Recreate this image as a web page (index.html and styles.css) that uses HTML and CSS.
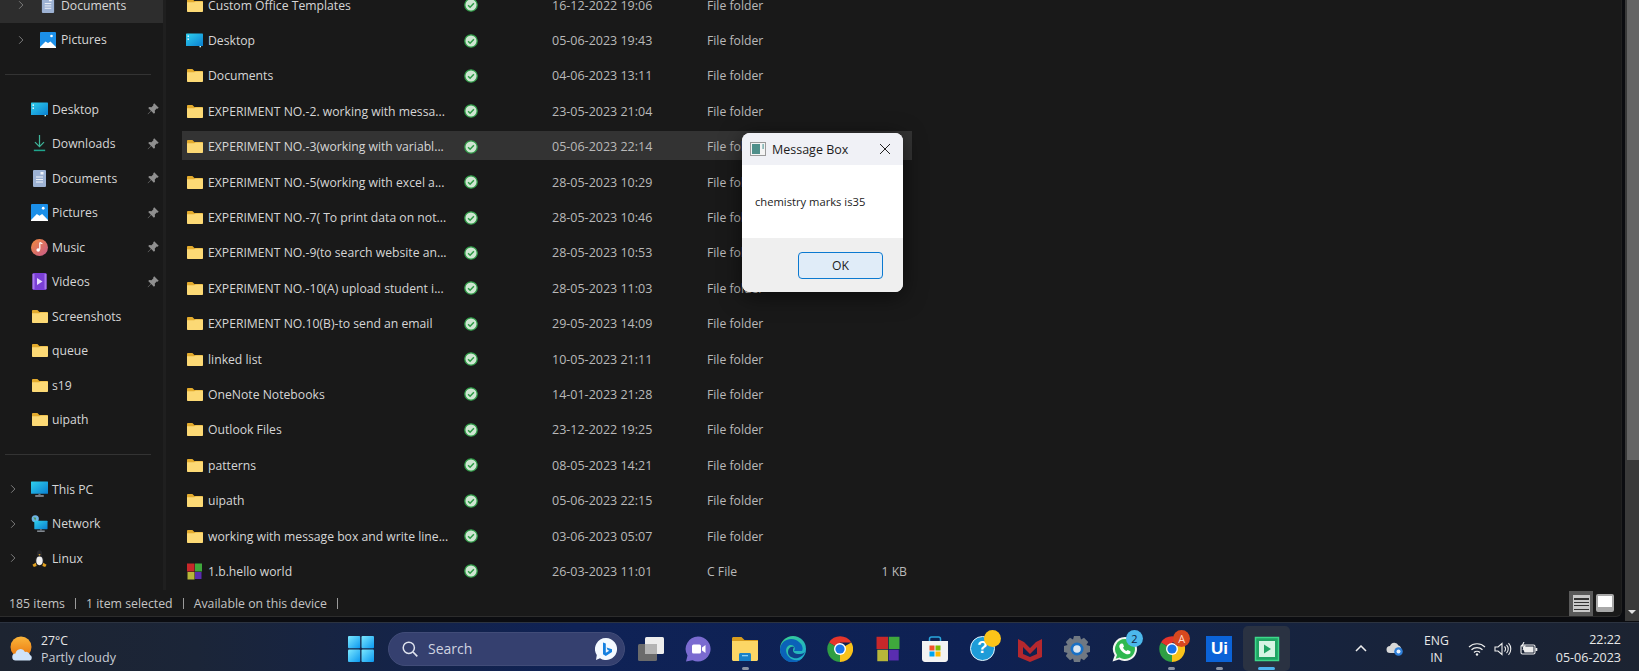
FILE: index.html
```html
<!DOCTYPE html>
<html>
<head>
<meta charset="UTF-8">
<title>File Explorer</title>
<link rel="stylesheet" href="styles.css">
</head>
<body>
<svg class="defs" width="0" height="0">
  <defs>
    <linearGradient id="sky" x1="0" y1="0" x2="1" y2="1"><stop offset="0" stop-color="#2fd0ee"/><stop offset="1" stop-color="#0a7fd0"/></linearGradient>
    <linearGradient id="tile" x1="0" y1="0" x2="1" y2="1"><stop offset="0" stop-color="#7ce8ff"/><stop offset="1" stop-color="#0a98f0"/></linearGradient>
    <symbol id="i-folder" viewBox="0 0 16 13">
      <path d="M0 1.200C0 .5.4 0 1 0h4.400l2 2H15c.6 0 1 .4 1 1v2H0z" fill="#e3ab2d"/>
      <path d="M0 3.200h7.200L8.800 2.400H15c.6 0 1 .4 1 1V12c0 .6-.4 1-1 1H1c-.6 0-1-.4-1-1z" fill="#fcd975"/>
    </symbol>
    <symbol id="i-check" viewBox="0 0 14 14">
      <circle cx="7" cy="7" r="6.200" fill="#cfe6d2" stroke="#2d9a45" stroke-width="1.300"/>
      <path d="M4.100 7.200l2 2 3.800-4" fill="none" stroke="#2d9a45" stroke-width="1.500"/>
    </symbol>
    <symbol id="i-pin" viewBox="0 0 12 12">
      <path d="M7.200.3l4.500 4.500-1.200 1-.8-.2-1.900 1.900.2 2.200-1.100 1.100-2.700-2.700L1 11.300.7 11l3.200-3.200-2.700-2.700 1.100-1.100 2.200.2 1.900-1.900-.2-.8z" fill="#8f8f8f"/>
    </symbol>
    <symbol id="i-chev" viewBox="0 0 8 12">
      <path d="M1.500 1l5 5-5 5" fill="none" stroke="#7c7c7c" stroke-width="1.300"/>
    </symbol>
    <symbol id="i-desktop" viewBox="0 0 17 14">
      <path d="M0 1c0-.6.4-1 1-1h15c.6 0 1 .4 1 1v11.500H0z" fill="url(#sky)"/>
      <rect x="1.500" y="2" width="1.500" height="1.300" fill="#fff"/><rect x="1.500" y="5" width="1.500" height="1.300" fill="#fff"/>
      <rect x="13.500" y="12.500" width="1.500" height="1.300" fill="#cfe"/>
    </symbol>
    <symbol id="i-download" viewBox="0 0 14 18">
      <path d="M7 0v12M2.200 7.500L7 12.300l4.800-4.800" fill="none" stroke="#3fb59a" stroke-width="1.300"/>
      <rect x="1" y="15.500" width="12" height="1.600" fill="#1fa58d"/>
    </symbol>
    <symbol id="i-doc" viewBox="0 0 13 17">
      <rect width="13" height="17" rx="1" fill="#9db2d3"/>
      <path d="M3 7h7M3 9.500h7M3 12h7" stroke="#f1f4fa" stroke-width="1"/><rect x="7.500" y="2" width="3" height="2.500" fill="#f1f4fa"/>
    </symbol>
    <symbol id="i-pic" viewBox="0 0 16 16">
      <rect width="16" height="16" rx="1" fill="#1b8fe8"/>
      <path d="M0 15l5.500-5.500 2.500 1.500 2.500-1.500L16 15v1H0z" fill="#fff"/><circle cx="11.500" cy="4" r="1.300" fill="#fff"/>
    </symbol>
    <symbol id="i-music" viewBox="0 0 17 17">
      <defs><linearGradient id="mus" x1="0" y1="0" x2="1" y2="1"><stop offset="0" stop-color="#f28a3c"/><stop offset="1" stop-color="#c65a8c"/></linearGradient></defs>
      <circle cx="8.500" cy="8.500" r="8.500" fill="url(#mus)"/>
      <path d="M8.800 3.500v7M8.800 3.500l2.600 1.300" stroke="#fff" stroke-width="1.200" fill="none"/><circle cx="7.200" cy="11" r="1.800" fill="#fff"/>
    </symbol>
    <symbol id="i-video" viewBox="0 0 14 17">
      <rect width="14" height="17" rx="1" fill="#7a3fd6"/>
      <path d="M0 1h2v15H0zM12 1h2v15h-2z" fill="#a878ee"/><path d="M4.500 5l5.500 3.500-5.500 3.500z" fill="#e8dcff"/>
    </symbol>
    <symbol id="i-pc" viewBox="0 0 16 15">
      <rect y="0" width="16" height="11.500" rx=".5" fill="url(#sky)"/><rect x="4" y="13" width="8" height="1.200" fill="#aab4bf"/><rect x="7" y="11.500" width="2" height="1.500" fill="#6d7780"/>
    </symbol>
    <symbol id="i-net" viewBox="0 0 17 18">
      <circle cx="4" cy="4" r="3.800" fill="#6fb4e6"/><path d="M2 2.500l3 .5-1 3z" fill="#4d9a55"/>
      <rect x="3" y="6" width="14" height="9" rx=".5" fill="url(#sky)"/><rect x="6" y="16.500" width="8" height="1.200" fill="#aab4bf"/><rect x="9" y="15" width="2" height="1.500" fill="#6d7780"/>
    </symbol>
    <symbol id="i-linux" viewBox="0 0 15 18">
      <ellipse cx="7.500" cy="4" rx="2.800" ry="3.800" fill="#26262a"/><ellipse cx="7.500" cy="11" rx="4.600" ry="5.500" fill="#26262a"/>
      <ellipse cx="7.500" cy="11.500" rx="3.400" ry="4.600" fill="#f1f1f1"/><path d="M6.300 4.500h2.400L7.500 6z" fill="#f0b429"/>
      <path d="M0 15.500l3.500-2 1 3.500-3 1zM15 15.500l-3.500-2-1 3.500 3 1z" fill="#e0a020"/>
    </symbol>
    <symbol id="i-cfile" viewBox="0 0 16 17">
      <rect x=".5" y=".5" width="7.500" height="8" fill="#c8282a"/><rect x="8.500" y=".5" width="7" height="8" fill="#3fa83c"/>
      <rect x="1" y="9" width="7" height="7.500" fill="#b8b63a"/><rect x="8.500" y="9" width="6.500" height="7" fill="#5a2db0"/>
    </symbol>
    <symbol id="i-winlogo" viewBox="0 0 26 26">
      <rect width="12.200" height="12.200" rx="1" fill="url(#tile)"/><rect x="13.500" width="12.500" height="12.200" rx="1" fill="url(#tile)"/>
      <rect y="13.500" width="12.200" height="12.500" rx="1" fill="url(#tile)"/><rect x="13.500" y="13.500" width="12.500" height="12.500" rx="1" fill="url(#tile)"/>
    </symbol>
    <symbol id="i-task-view" viewBox="0 0 26 24">
      <rect y="7" width="19" height="17" rx="1.500" fill="#6b6b6b"/><rect x="7" width="19" height="17" rx="1.500" fill="#ededed"/><rect x="7" y="7" width="12" height="10" fill="#b4b4b4"/>
    </symbol>
    <symbol id="i-chat" viewBox="0 0 26 26">
      <path d="M13 .5a12.500 12.500 0 1 1-5.500 23.700L1 25.500l1.500-6A12.500 12.500 0 0 1 13 .5z" fill="#7a6bd0"/>
      <rect x="7" y="8.500" width="9" height="9" rx="1.500" fill="#fff"/><path d="M17 11.500l3.500-2.500v8L17 14.500z" fill="#fff"/>
    </symbol>
    <symbol id="i-explorer" viewBox="0 0 26 24">
      <path d="M0 1.500C0 .7.700 0 1.500 0h8l3 3H26v3H0z" fill="#d89c1e"/><path d="M0 4h26v18.500c0 .8-.7 1.500-1.500 1.500h-23C.7 24 0 23.300 0 22.500z" fill="#fcd665"/>
      <path d="M7 17.500c0-.8.700-1.500 1.500-1.500h9c.8 0 1.500.7 1.500 1.500V24H7z" fill="#1a82c8"/><rect x="10" y="18" width="6" height="1.300" fill="#8cd0f5"/>
    </symbol>
    <symbol id="i-edge" viewBox="0 0 26 26">
      <defs><linearGradient id="edg" x1="0" y1="0" x2="1" y2="1"><stop offset="0" stop-color="#3bd38a"/><stop offset="1" stop-color="#1aa7d8"/></linearGradient></defs>
      <circle cx="13" cy="13" r="13" fill="url(#edg)"/>
      <path d="M0 13C1 4 10 1 16 4c5 2.500 8 7 6 11h-8c2-3 0-6-3-6-5 0-7 7-2 12 2 2 6 4.500 12 2.500A13 13 0 0 1 0 13z" fill="#0b62b8"/>
      <path d="M8 16c0 5 6 7 10 6 3-1 6-3 7-6-2 2-4 2-7 2-5 0-6-4-4-7-3-1-6 1-6 5z" fill="#0f3f88"/>
    </symbol>
    <symbol id="i-chrome" viewBox="0 0 26 26">
      <path d="M13 13L2 6.500A13 13 0 0 1 24.300 6.500H13z" fill="#e5352b"/><path d="M13 13L24.300 6.500A13 13 0 0 1 13 26z" fill="#f9c21a"/><path d="M13 13V26A13 13 0 0 1 2 6.500z" fill="#2f9e44"/>
      <circle cx="13" cy="13" r="6" fill="#fff"/><circle cx="13" cy="13" r="4.600" fill="#1a73e8"/>
    </symbol>
    <symbol id="i-store" viewBox="0 0 26 26">
      <path d="M7.500 6V3c0-1 .7-2 2-2h7c1.300 0 2 1 2 2v3" fill="none" stroke="#2aa6dd" stroke-width="1.500"/>
      <path d="M0 5h26v18c0 1.600-1.200 3-3 3H3c-1.800 0-3-1.400-3-3z" fill="#f3f3f3"/>
      <rect x="7.500" y="9.500" width="5" height="5" fill="#f2502a"/><rect x="13.500" y="9.500" width="5" height="5" fill="#7fba00"/><rect x="7.500" y="15.500" width="5" height="5" fill="#00a4ef"/><rect x="13.500" y="15.500" width="5" height="5" fill="#ffb900"/>
    </symbol>
    <symbol id="i-mcafee" viewBox="0 0 24 26">
      <path d="M0 3l6 3 6 6 6-6 6-3v18l-12 5-12-5zM5 11v7l7 3 7-3v-7l-7 7z" fill="#b5282e" fill-rule="evenodd"/>
    </symbol>
    <symbol id="i-gear" viewBox="0 0 26 26">
      <path d="M10 0h6l1 3.500 3-1.800 4.200 4.200-1.800 3L26 10v6l-3.600 1 1.800 3-4.200 4.200-3-1.800L16 26h-6l-1-3.600-3 1.800L1.800 20l1.800-3L0 16v-6l3.600-1-1.800-3L6 1.700l3 1.800z" fill="#707882"/>
      <circle cx="13" cy="13" r="6.500" fill="#1a70c4"/><circle cx="13" cy="13" r="3.800" fill="#dce6f0"/>
    </symbol>
    <symbol id="i-whatsapp" viewBox="0 0 26 26">
      <path d="M13 1a12 12 0 1 1-6 22.400L.5 25.500l2.200-6.200A12 12 0 0 1 13 1z" fill="#f2f5f2"/>
      <path d="M13 3a10 10 0 1 1-5.300 18.500l-4 1.200 1.300-3.800A10 10 0 0 1 13 3z" fill="#2fb84f"/>
      <path d="M9 7.500l2 .2 1 2.800-1 1.300c.8 1.500 1.900 2.600 3.400 3.300l1.300-1.100 2.700 1.200v2c-1 1.300-3 1.500-5 .5-3-1.400-5-3.500-6-6.500-.4-1.500.4-3 1.600-3.700z" fill="#fff"/>
    </symbol>
    <symbol id="i-run" viewBox="0 0 26 26">
      <rect x="1.500" y="1.500" width="23" height="23" fill="#1fa463" stroke="#3dd88a" stroke-width="1.500"/>
      <rect x="5" y="5" width="16" height="16" fill="#d6f5e4"/><path d="M10 8.500l7 4.500-7 4.500z" fill="#1fa463"/>
    </symbol>
    <symbol id="i-bing" viewBox="0 0 22 22">
      <path d="M11 0a11 11 0 1 1-6 20.200L1 22l.8-5A11 11 0 0 1 11 0z" fill="#f4f9ff"/>
      <path d="M8 4.500l2.800 1v9.200l3.500-2-1.700-.8-1-2.500 5.400 1.800v2.800L10.800 18 8 16.300z" fill="#1580e0"/>
    </symbol>
    <symbol id="i-weather" viewBox="0 0 24 25">
      <defs><linearGradient id="sun" x1="0" y1="0" x2="0" y2="1"><stop offset="0" stop-color="#fbb53a"/><stop offset="1" stop-color="#e8750e"/></linearGradient></defs>
      <circle cx="11" cy="11" r="10.500" fill="url(#sun)"/>
      <path d="M6 24.500a3.500 3.500 0 0 1-.5-7 5 5 0 0 1 9.500-1.500 4 4 0 0 1 5 3 3 3 0 0 1 0 5.500z" fill="#cfe3fa"/>
    </symbol>
  </defs>
</svg>

<div class="explorer">
  <div class="window">
    <div class="panes">
      <!-- left navigation -->
      <div class="nav">
        <div class="nav-top">
          <div class="nav-row sub current"><svg class="chev"><use href="#i-chev"/></svg><svg class="ico-doc-sm"><use href="#i-doc"/></svg><span>Documents</span></div>
          <div class="nav-row sub"><svg class="chev"><use href="#i-chev"/></svg><svg class="ico-doc-sm"><use href="#i-pic"/></svg><span>Pictures</span></div>
        </div>
        <div class="nav-sep"></div>
        <div class="nav-row"><svg class="ico"><use href="#i-desktop"/></svg><span>Desktop</span><svg class="pin"><use href="#i-pin"/></svg></div>
        <div class="nav-row"><svg class="ico"><use href="#i-download"/></svg><span>Downloads</span><svg class="pin"><use href="#i-pin"/></svg></div>
        <div class="nav-row"><svg class="ico"><use href="#i-doc"/></svg><span>Documents</span><svg class="pin"><use href="#i-pin"/></svg></div>
        <div class="nav-row"><svg class="ico"><use href="#i-pic"/></svg><span>Pictures</span><svg class="pin"><use href="#i-pin"/></svg></div>
        <div class="nav-row"><svg class="ico"><use href="#i-music"/></svg><span>Music</span><svg class="pin"><use href="#i-pin"/></svg></div>
        <div class="nav-row"><svg class="ico"><use href="#i-video"/></svg><span>Videos</span><svg class="pin"><use href="#i-pin"/></svg></div>
        <div class="nav-row"><svg class="ico fold"><use href="#i-folder"/></svg><span>Screenshots</span></div>
        <div class="nav-row"><svg class="ico fold"><use href="#i-folder"/></svg><span>queue</span></div>
        <div class="nav-row"><svg class="ico fold"><use href="#i-folder"/></svg><span>s19</span></div>
        <div class="nav-row"><svg class="ico fold"><use href="#i-folder"/></svg><span>uipath</span></div>
        <div class="nav-sep"></div>
        <div class="nav-row tree"><svg class="chev"><use href="#i-chev"/></svg><svg class="ico"><use href="#i-pc"/></svg><span>This PC</span></div>
        <div class="nav-row tree"><svg class="chev"><use href="#i-chev"/></svg><svg class="ico"><use href="#i-net"/></svg><span>Network</span></div>
        <div class="nav-row tree"><svg class="chev"><use href="#i-chev"/></svg><svg class="ico"><use href="#i-linux"/></svg><span>Linux</span></div>
      </div>
      <!-- file list -->
      <div class="files">
        <div class="file"><svg class="ficon"><use href="#i-folder"/></svg><span class="fname">Custom Office Templates</span><svg class="fstat"><use href="#i-check"/></svg><span class="fdate">16-12-2022 19:06</span><span class="ftype">File folder</span></div>
        <div class="file"><svg class="ficon big"><use href="#i-desktop"/></svg><span class="fname">Desktop</span><svg class="fstat"><use href="#i-check"/></svg><span class="fdate">05-06-2023 19:43</span><span class="ftype">File folder</span></div>
        <div class="file"><svg class="ficon"><use href="#i-folder"/></svg><span class="fname">Documents</span><svg class="fstat"><use href="#i-check"/></svg><span class="fdate">04-06-2023 13:11</span><span class="ftype">File folder</span></div>
        <div class="file"><svg class="ficon"><use href="#i-folder"/></svg><span class="fname">EXPERIMENT NO.-2. working with messa...</span><svg class="fstat"><use href="#i-check"/></svg><span class="fdate">23-05-2023 21:04</span><span class="ftype">File folder</span></div>
        <div class="file hover"><svg class="ficon"><use href="#i-folder"/></svg><span class="fname">EXPERIMENT NO.-3(working with variabl...</span><svg class="fstat"><use href="#i-check"/></svg><span class="fdate">05-06-2023 22:14</span><span class="ftype">File folder</span></div>
        <div class="file"><svg class="ficon"><use href="#i-folder"/></svg><span class="fname">EXPERIMENT NO.-5(working with excel a...</span><svg class="fstat"><use href="#i-check"/></svg><span class="fdate">28-05-2023 10:29</span><span class="ftype">File folder</span></div>
        <div class="file"><svg class="ficon"><use href="#i-folder"/></svg><span class="fname">EXPERIMENT NO.-7( To print data on not...</span><svg class="fstat"><use href="#i-check"/></svg><span class="fdate">28-05-2023 10:46</span><span class="ftype">File folder</span></div>
        <div class="file"><svg class="ficon"><use href="#i-folder"/></svg><span class="fname">EXPERIMENT NO.-9(to search website an...</span><svg class="fstat"><use href="#i-check"/></svg><span class="fdate">28-05-2023 10:53</span><span class="ftype">File folder</span></div>
        <div class="file"><svg class="ficon"><use href="#i-folder"/></svg><span class="fname">EXPERIMENT NO.-10(A) upload student i...</span><svg class="fstat"><use href="#i-check"/></svg><span class="fdate">28-05-2023 11:03</span><span class="ftype">File folder</span></div>
        <div class="file"><svg class="ficon"><use href="#i-folder"/></svg><span class="fname">EXPERIMENT NO.10(B)-to send an email</span><svg class="fstat"><use href="#i-check"/></svg><span class="fdate">29-05-2023 14:09</span><span class="ftype">File folder</span></div>
        <div class="file"><svg class="ficon"><use href="#i-folder"/></svg><span class="fname">linked list</span><svg class="fstat"><use href="#i-check"/></svg><span class="fdate">10-05-2023 21:11</span><span class="ftype">File folder</span></div>
        <div class="file"><svg class="ficon"><use href="#i-folder"/></svg><span class="fname">OneNote Notebooks</span><svg class="fstat"><use href="#i-check"/></svg><span class="fdate">14-01-2023 21:28</span><span class="ftype">File folder</span></div>
        <div class="file"><svg class="ficon"><use href="#i-folder"/></svg><span class="fname">Outlook Files</span><svg class="fstat"><use href="#i-check"/></svg><span class="fdate">23-12-2022 19:25</span><span class="ftype">File folder</span></div>
        <div class="file"><svg class="ficon"><use href="#i-folder"/></svg><span class="fname">patterns</span><svg class="fstat"><use href="#i-check"/></svg><span class="fdate">08-05-2023 14:21</span><span class="ftype">File folder</span></div>
        <div class="file"><svg class="ficon"><use href="#i-folder"/></svg><span class="fname">uipath</span><svg class="fstat"><use href="#i-check"/></svg><span class="fdate">05-06-2023 22:15</span><span class="ftype">File folder</span></div>
        <div class="file"><svg class="ficon"><use href="#i-folder"/></svg><span class="fname">working with message box and write line...</span><svg class="fstat"><use href="#i-check"/></svg><span class="fdate">03-06-2023 05:07</span><span class="ftype">File folder</span></div>
        <div class="file"><svg class="ficon big"><use href="#i-cfile"/></svg><span class="fname">1.b.hello world</span><svg class="fstat"><use href="#i-check"/></svg><span class="fdate">26-03-2023 11:01</span><span class="ftype">C File</span><span class="fsize">1 KB</span></div>
      </div>
    </div>
    <!-- status bar -->
    <div class="status">
      <span>185 items</span><i></i><span>1 item selected</span><i></i><span>Available on this device</span><i></i>
      <div class="views">
        <div class="view-btn on"><div class="lines"></div></div>
        <div class="view-btn"><div class="tiles"></div></div>
      </div>
    </div>
  </div>
  <div class="scrollbar"><div class="thumb"></div><div class="arrow"></div></div>
</div>

<div class="taskbar">
  <div class="weather">
    <svg class="weather-ico"><use href="#i-weather"/></svg>
    <div class="weather-txt"><div class="temp">27°C</div><div class="cond">Partly cloudy</div></div>
  </div>
  <svg class="winlogo"><use href="#i-winlogo"/></svg>
  <div class="search">
    <svg class="glass" viewBox="0 0 16 16"><circle cx="6.800" cy="6.800" r="5.600" fill="none" stroke="#dfe3ee" stroke-width="1.500"/><path d="M11 11l4.300 4.300" stroke="#dfe3ee" stroke-width="1.700"/></svg>
    <span>Search</span>
    <svg class="bing"><use href="#i-bing"/></svg>
  </div>
  <div class="apps">
    <div class="app"><svg><use href="#i-task-view"/></svg></div>
    <div class="app"><svg><use href="#i-chat"/></svg></div>
    <div class="app open"><svg><use href="#i-explorer"/></svg></div>
    <div class="app"><svg><use href="#i-edge"/></svg></div>
    <div class="app"><svg><use href="#i-chrome"/></svg></div>
    <div class="app"><svg><use href="#i-cfile"/></svg></div>
    <div class="app"><svg><use href="#i-store"/></svg></div>
    <div class="app"><div class="help">?</div><span class="dot"></span></div>
    <div class="app"><svg><use href="#i-mcafee"/></svg></div>
    <div class="app"><svg><use href="#i-gear"/></svg></div>
    <div class="app"><svg><use href="#i-whatsapp"/></svg><span class="badge blue">2</span></div>
    <div class="app open"><svg><use href="#i-chrome"/></svg><span class="badge red">A</span></div>
    <div class="app open"><div class="ui-logo">Ui</div></div>
    <div class="app active"><svg><use href="#i-run"/></svg></div>
  </div>
  <div class="tray">
    <svg class="caret" viewBox="0 0 12 7"><path d="M1 6l5-5 5 5" fill="none" stroke="#eee" stroke-width="1.500"/></svg>
    <svg class="cloud" viewBox="0 0 18 14"><path d="M4 11a3.500 3.500 0 0 1 0-7 4.500 4.500 0 0 1 8.500-.5A3.500 3.500 0 0 1 15 8H9v3z" fill="#d8d8d8"/><circle cx="12.500" cy="9.500" r="4.300" fill="#2f7fd8"/><circle cx="12.500" cy="9.500" r="2" fill="#e8f2ff"/></svg>
    <div class="lang"><div>ENG</div><div>IN</div></div>
    <svg class="wifi" viewBox="0 0 18 14"><path d="M1 5a11.500 11.500 0 0 1 16 0M3.500 7.800a8 8 0 0 1 11 0M6 10.500a4.300 4.300 0 0 1 6 0" fill="none" stroke="#eee" stroke-width="1.200"/><circle cx="9" cy="12.500" r="1.200" fill="#eee"/></svg>
    <svg class="vol" viewBox="0 0 18 14"><path d="M1 5h3l4-3.500v11L4 9H1z" fill="none" stroke="#eee" stroke-width="1.100"/><path d="M10.500 4.500a3.500 3.500 0 0 1 0 5M12.500 2.800a6 6 0 0 1 0 8.400M14.500 1.200a8.500 8.500 0 0 1 0 11.600" fill="none" stroke="#eee" stroke-width="1.100"/></svg>
    <svg class="batt" viewBox="0 0 18 14"><rect x="1" y="3" width="14" height="9" rx="1.500" fill="none" stroke="#eee" stroke-width="1.100"/><rect x="15.500" y="6" width="1.800" height="3" fill="#eee"/><path d="M2.500 4.500h11v6h-9z" fill="#eee"/><path d="M4 0L2 4h3L3 8" fill="none" stroke="#eee" stroke-width="1.100"/></svg>
    <div class="clock"><div>22:22</div><div>05-06-2023</div></div>
  </div>
</div>

<!-- dialog on top of the explorer window -->
<div class="dialog">
  <div class="dlg-title">
    <svg class="dlg-ico" viewBox="0 0 16 14"><rect x=".5" y=".5" width="15" height="13" fill="#f4f4f4" stroke="#9a9a9a"/><rect x="2" y="2" width="8" height="10" fill="#4f8f8a"/><rect x="12.500" y="2" width="1.200" height="5" fill="#5fa0a0"/></svg>
    <span>Message Box</span>
    <svg class="dlg-close" viewBox="0 0 12 12"><path d="M1 1l10 10M11 1L1 11" stroke="#222" stroke-width="1"/></svg>
  </div>
  <div class="dlg-body">chemistry marks is35</div>
  <div class="dlg-foot"><div class="dlg-ok">OK</div></div>
</div>
</body>
</html>
```

FILE: styles.css
```css
* {
	box-sizing: border-box;
}
html, body {
	margin: 0;
	height: 671px;
	overflow: hidden;
	background: #0b0c10;
	font-family: "Open Sans", "Noto Sans", sans-serif;
	font-size: 12.2px;
	color: #d6d6d6;
}
.defs {
	position: absolute;
}
.explorer {
	height: 622px;
	width: 1639px;
	display: flex;
	align-items: flex-start;
}
.window {
	width: 1622px;
	height: 617px;
	flex: none;
	display: flex;
	flex-direction: column;
	background: #191919;
	border-bottom: 1px solid #2c2c2c;
	border-right: 1px solid #202020;
	border-bottom-right-radius: 6px;
}
.panes {
	flex: 1;
	display: flex;
	overflow: hidden;
}

/* navigation */
.nav {
	width: 166px;
	flex: none;
	border-right: 3px solid #1f1f1f;
}
.nav-top {
	margin-top: -12px;
}
.nav-row {
	height: 34.5px;
	display: flex;
	align-items: center;
	padding-left: 31px;
	white-space: nowrap;
}
.nav-row.sub {
	padding-left: 18px;
}
.nav-row.tree {
	padding-left: 10px;
}
.nav-row.current {
	background: #2d2d2d;
}
.nav-row .ico {
	width: 17px;
	height: 17px;
	margin-right: 4px;
	flex: none;
}
.nav-row .ico.fold {
	width: 16px;
	height: 13px;
	margin-left: 1px;
}
.nav-row .ico-doc-sm {
	width: 16px;
	height: 16px;
	margin: 0 5px 0 4px;
	flex: none;
}
.nav-row .chev {
	width: 6px;
	height: 10px;
	margin-right: 15px;
	flex: none;
}
.nav-row.sub .chev {
	margin-right: 12px;
}
.nav-row .pin {
	width: 12px;
	height: 12px;
	margin-left: auto;
	margin-right: 4px;
}
.nav-sep {
	height: 1px;
	margin: 17px 12px 17px 5px;
	background: #333;
}

/* file list */
.files {
	flex: 1;
	margin-top: -12.5px;
	padding-left: 16px;
}
.file {
	height: 35.4px;
	width: 730px;
	display: flex;
	align-items: center;
	position: relative;
	white-space: nowrap;
}
.file.hover::before {
	content: "";
	position: absolute;
	left: 0;
	right: 0;
	top: 2px;
	height: 29px;
	background: #333;
}
.file > * {
	position: relative;
}
.ficon {
	width: 16px;
	height: 13px;
	margin: 0 5px 0 5px;
	flex: none;
}
.ficon.big {
	width: 17px;
	height: 17px;
	margin: 0 5px 0 4px;
}
.fname {
	width: 256px;
	flex: none;
}
.fstat {
	width: 14px;
	height: 14px;
	flex: none;
}
.fdate {
	width: 155px;
	margin-left: 74px;
	flex: none;
	font-size: 12.5px;
	color: #b9b9b9;
}
.ftype {
	width: 125px;
	flex: none;
	color: #b9b9b9;
}
.fsize {
	width: 75px;
	text-align: right;
	color: #b9b9b9;
}

.scrollbar {
	width: 14px;
	height: 621px;
	margin-left: 3px;
	background: #3a3a3a;
	position: relative;
	flex: none;
}
.thumb {
	height: 460px;
	margin-left: 2px;
	background: #646464;
}
.arrow {
	position: absolute;
	left: 3px;
	bottom: 7px;
	border: 4px solid transparent;
	border-top: 4px solid #e0e0e0;
	border-bottom: 0;
}

/* status bar */
.status {
	height: 26px;
	display: flex;
	align-items: center;
	padding-left: 9px;
	font-size: 12.3px;
	color: #c4c4c4;
	white-space: nowrap;
}
.status i {
	width: 1px;
	height: 11px;
	background: #9a9a9a;
	margin: 0 10px;
}
.views {
	margin-left: auto;
	margin-right: 7px;
	display: flex;
	align-items: center;
	gap: 3px;
}
.view-btn {
	width: 18px;
	height: 25px;
	display: flex;
	align-items: center;
	justify-content: center;
}
.view-btn.on {
	width: 24px;
	background: #5a5a5a;
}
.lines {
	width: 17px;
	height: 17px;
	background: repeating-linear-gradient(#c9c9c9 0 2px, #333 2px 3.500px);
	border: 1px solid #c9c9c9;
}
.tiles {
	width: 18px;
	height: 18px;
	background: #fff;
	border: 2px solid #a8a8a8;
	border-bottom-width: 5px;
	border-radius: 2px;
}

/* taskbar */
.taskbar {
	position: absolute;
	left: 0;
	right: 0;
	top: 622px;
	height: 49px;
	padding-top: 3px;
	display: flex;
	align-items: center;
	background: linear-gradient(90deg, #1d2431 0, #1b2538 12%, #0f2256 35%, #0e2153 60%, #16233f 78%, #1c2331 100%);
	border-top: 1px solid #2c3340;
	color: #e8e8e8;
}
.weather {
	width: 348px;
	flex: none;
	display: flex;
	align-items: center;
	padding-left: 10px;
}
.weather-ico {
	width: 24px;
	height: 25px;
}
.weather-txt {
	margin-left: 7px;
	line-height: 17px;
}
.cond {
	color: #c8ccd4;
	font-size: 12.500px;
}
.winlogo {
	width: 26px;
	height: 26px;
	flex: none;
}
.search {
	width: 237px;
	height: 34px;
	margin-left: 14px;
	flex: none;
	display: flex;
	align-items: center;
	padding-left: 13px;
	border-radius: 17px;
	background: #35406f;
	border: 1px solid #414c78;
	font-size: 14px;
	color: #cfd3e0;
}
.glass {
	width: 16px;
	height: 16px;
	margin-right: 10px;
}
.bing {
	width: 22px;
	height: 22px;
	margin-left: auto;
	margin-right: 7px;
}
.apps {
	display: flex;
	margin-left: 2px;
	height: 45px;
}
.app {
	width: 47.4px;
	height: 45px;
	position: relative;
	display: flex;
	align-items: center;
	justify-content: center;
}
.app > svg {
	width: 26px;
	height: 26px;
}
.app.open::after,
.app.active::after {
	content: "";
	position: absolute;
	bottom: 1px;
	left: 50%;
	width: 7px;
	height: 3px;
	margin-left: -3.5px;
	border-radius: 2px;
	background: #8b93a3;
}
.app.active {
	background: #2a3242;
	border-radius: 5px;
}
.app.active::after {
	width: 17px;
	margin-left: -8.5px;
	background: #4db3ee;
}
.help {
	width: 25px;
	height: 25px;
	border-radius: 50%;
	background: #1e9cd8;
	border: 1.5px solid #e8f6fd;
	color: #fff;
	font: bold 17px/22px "Liberation Sans", sans-serif;
	text-align: center;
}
.dot {
	position: absolute;
	top: 4px;
	left: 25px;
	width: 17px;
	height: 17px;
	border-radius: 50%;
	background: #fcc419;
}
.badge {
	position: absolute;
	top: 4px;
	left: 25px;
	width: 17px;
	height: 17px;
	border-radius: 50%;
	text-align: center;
	font-size: 11px;
	line-height: 17px;
}
.badge.blue {
	background: #4cb8ec;
	color: #10233f;
}
.badge.red {
	background: #d8481f;
	color: #ffd9c8;
}
.ui-logo {
	width: 26px;
	height: 26px;
	background: #0b63d8;
	color: #fff;
	font: bold 17px/26px "Liberation Sans", sans-serif;
	text-align: center;
}
.tray {
	flex: 1;
	display: flex;
	align-items: center;
	padding-left: 65px;
	white-space: nowrap;
}
.caret {
	width: 12px;
	height: 7px;
}
.cloud {
	width: 18px;
	height: 14px;
	margin-left: 19px;
}
.lang {
	width: 30px;
	margin-left: 17px;
	text-align: center;
	line-height: 17px;
}
.wifi, .vol, .batt {
	width: 18px;
	height: 14px;
}
.wifi {
	margin-left: 17px;
}
.vol {
	margin-left: 8px;
}
.batt {
	margin-left: 8px;
}
.clock {
	margin-left: auto;
	margin-right: 18px;
	text-align: right;
	line-height: 18px;
	font-size: 12.5px;
}

/* message box */
.dialog {
	position: absolute;
	left: 742px;
	top: 133px;
	width: 161px;
	height: 159px;
	display: flex;
	flex-direction: column;
	border-radius: 8px;
	overflow: hidden;
	background: #fff;
	box-shadow: 0 4px 22px rgba(0, 0, 0, 0.55);
	color: #1c1c1c;
}
.dlg-title {
	height: 32px;
	flex: none;
	display: flex;
	align-items: center;
	padding-left: 8px;
	background: #f0f1f6;
}
.dlg-ico {
	width: 16px;
	height: 14px;
	margin-right: 6px;
}
.dlg-title span {
	font-size: 12.500px;
}
.dlg-close {
	width: 12px;
	height: 12px;
	margin-left: auto;
	margin-right: 12px;
}
.dlg-body {
	flex: 1;
	display: flex;
	align-items: center;
	padding: 0 0 1px 13px;
	font-size: 11.2px;
}
.dlg-foot {
	height: 54px;
	flex: none;
	background: #efefef;
	padding: 14px 0 0 56px;
}
.dlg-ok {
	width: 85px;
	height: 27px;
	border: 1px solid #0b79d0;
	border-radius: 4px;
	background: #e0ecf8;
	text-align: center;
	line-height: 25px;
}
```
